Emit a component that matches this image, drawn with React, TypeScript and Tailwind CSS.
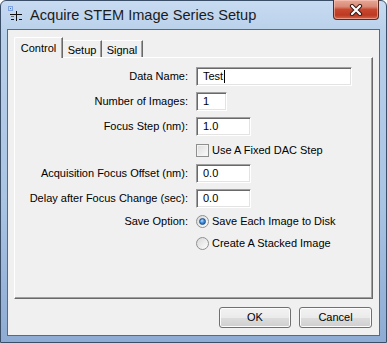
import React from "react";

const TitleIcon = () => (
  <svg width="16" height="16" viewBox="0 0 16 16" className="shrink-0">
    <rect x="0.5" y="0.5" width="4" height="4" fill="none" stroke="#3b6fd0" strokeDasharray="1 1" />
    <rect x="2" y="2" width="1" height="1" fill="#3b6fd0" />
    <path d="M2 8.5h12M8.5 5v10M3 13.5h3M11 13.5h3" stroke="#111" strokeWidth="1" />
    <path d="M3 10.5h3" stroke="#777" strokeWidth="1" />
  </svg>
);

const CloseButton = () => (
  <div className="-mt-px flex h-[20px] w-[46px] items-center justify-center rounded-b-[4px] border border-t-0 border-[#5a2a22] bg-[linear-gradient(to_bottom,#e6a897_0%,#d98a76_35%,#c8472f_50%,#bd3a22_80%,#d8684e_100%)] shadow-[inset_0_0_0_1px_rgba(255,210,200,0.5)]">
    <svg width="14" height="12" viewBox="0 0 14 12">
      <path d="M3 2l8 8M11 2l-8 8" stroke="#3a1a16" strokeWidth="4.2" strokeLinecap="round" />
      <path d="M3 2l8 8M11 2l-8 8" stroke="#ffffff" strokeWidth="2.2" strokeLinecap="round" />
    </svg>
  </div>
);

const Field = ({ value, width, caret = false }: { value: string; width: string; caret?: boolean }) => (
  <div
    className={`flex h-[19px] ${width} items-center border border-t-[#a0a0a0] border-l-[#a0a0a0] border-r-white border-b-white bg-white pl-[6px] shadow-[inset_1px_1px_0_#696969,inset_-1px_-1px_0_#e3e3e3]`}
  >
    <span>{value}</span>
    {caret && <span className="ml-px h-[13px] w-px bg-black" />}
  </div>
);

const Checkbox = () => (
  <div className="h-[13px] w-[13px] shrink-0 border border-[#8e8f8f] bg-[linear-gradient(135deg,#dcdcdc,#fbfbfb)] shadow-[inset_0_0_0_1px_#f4f4f4]" />
);

const Radio = ({ checked = false }: { checked?: boolean }) => (
  <div className="flex h-[13px] w-[13px] shrink-0 items-center justify-center rounded-full border border-[#8e8f8f] bg-[linear-gradient(135deg,#d8d8d8,#fdfdfd)]">
    {checked && (
      <div className="h-[7px] w-[7px] rounded-full border border-[#1d4f8a] bg-[radial-gradient(circle_at_40%_35%,#b9e0ff_0%,#3f8fdc_45%,#154f9c_100%)]" />
    )}
  </div>
);

const Row = ({ label, mt, children }: { label?: string; mt: string; children: React.ReactNode }) => (
  <div className={`grid h-[19px] grid-cols-[173px_1fr] items-center gap-x-[8px] ${mt}`}>
    <div className="text-right">{label}</div>
    <div className="flex items-center">{children}</div>
  </div>
);

const Button = ({ children, width }: { children: React.ReactNode; width: string }) => (
  <div
    className={`flex h-[21px] ${width} items-center justify-center rounded-[3px] border border-[#707070] bg-[linear-gradient(to_bottom,#f2f2f2_0%,#ebebeb_50%,#dddddd_51%,#cfcfcf_100%)] shadow-[inset_0_0_0_1px_#fcfcfc]`}
  >
    {children}
  </div>
);

export default function App() {
  return (
    <div className="h-[343px] w-[387px] bg-white font-['Liberation_Sans',Arial,sans-serif] text-[11px] text-black">
      <div className="flex h-full w-full flex-col rounded-t-[6px] border border-[#3b4e68] bg-[linear-gradient(to_bottom,#c7dbf1_0%,#b9d0ea_10%,#a9c3e3_60%,#8eabd3_100%)]">
        {/* Title bar */}
        <div className="flex h-[28px] items-start">
          <div className="ml-[7px] mt-[5px]">
            <TitleIcon />
          </div>
          <div className="ml-[6px] mt-[5px] text-[14.6px] leading-[18px] text-[#1b1b1b]">
            Acquire STEM Image Series Setup
          </div>
          <div className="ml-auto mr-[7px]">
            <CloseButton />
          </div>
        </div>

        {/* Client area */}
        <div className="mx-[6px] mb-[6px] flex h-[307px] flex-col border border-[#56698a] bg-[#f0f0f0] px-[6px] pb-[7px] pt-[7px]">
          {/* Tabs */}
          <div className="flex h-[20px] items-end">
            <div className="relative z-10 -mb-px flex h-[21px] w-[49px] items-start justify-center rounded-tl-[2px] border-l border-t border-r border-l-white border-t-white border-r-[#696969] bg-[#f0f0f0] pt-[2px] shadow-[inset_-1px_0_0_#a0a0a0]">
              Control
            </div>
            <div className="flex h-[17px] w-[39px] items-start justify-center border-t border-r border-t-white border-r-[#696969] pt-[1px] shadow-[inset_-1px_0_0_#a0a0a0]">
              Setup
            </div>
            <div className="flex h-[17px] w-[41px] items-start justify-center border-t border-r border-t-white border-r-[#696969] pt-[1px] shadow-[inset_-1px_0_0_#a0a0a0]">
              Signal
            </div>
          </div>

          {/* Tab panel */}
          <div className="flex flex-1 flex-col border border-b-[#696969] border-l-white border-r-[#696969] border-t-white pt-[9px] shadow-[inset_-1px_-1px_0_#a0a0a0]">
            <Row label="Data Name:" mt="mt-0">
              <Field value="Test" width="w-[156px]" caret />
            </Row>
            <Row label="Number of Images:" mt="mt-[6px]">
              <Field value="1" width="w-[31px]" />
            </Row>
            <Row label="Focus Step (nm):" mt="mt-[6px]">
              <Field value="1.0" width="w-[55px]" />
            </Row>
            <Row mt="mt-[5px]">
              <Checkbox />
              <span className="ml-[3px]">Use A Fixed DAC Step</span>
            </Row>
            <Row label="Acquisition Focus Offset (nm):" mt="mt-[4px]">
              <Field value="0.0" width="w-[55px]" />
            </Row>
            <Row label="Delay after Focus Change (sec):" mt="mt-[6px]">
              <Field value="0.0" width="w-[55px]" />
            </Row>
            <Row label="Save Option:" mt="mt-[4px]">
              <Radio checked />
              <span className="ml-[3px]">Save Each Image to Disk</span>
            </Row>
            <Row mt="mt-[3px]">
              <Radio />
              <span className="ml-[3px]">Create A Stacked Image</span>
            </Row>
          </div>

          {/* Buttons */}
          <div className="mt-[8px] flex justify-end gap-[8px] pr-[1px]">
            <Button width="w-[72px]">OK</Button>
            <Button width="w-[73px]">Cancel</Button>
          </div>
        </div>
      </div>
    </div>
  );
}
